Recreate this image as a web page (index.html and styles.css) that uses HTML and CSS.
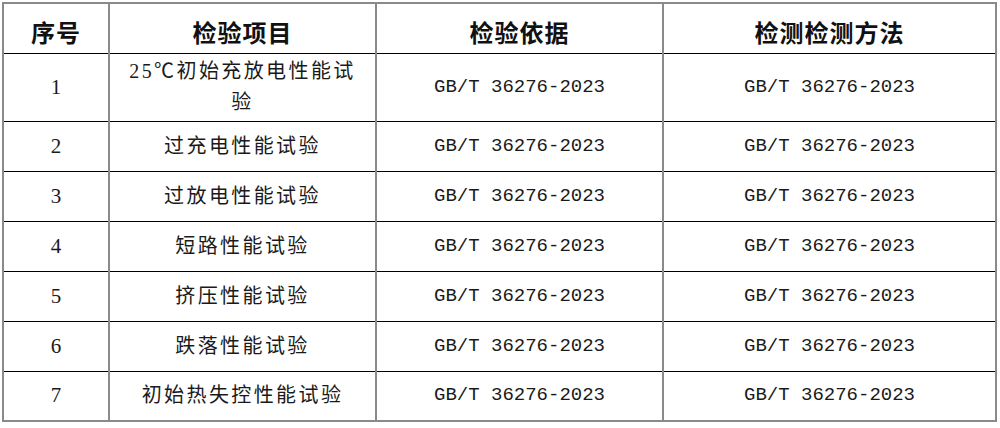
FILE: index.html
```html
<!DOCTYPE html>
<html lang="zh">
<head>
<meta charset="utf-8">
<link rel="stylesheet" href="styles.css">
</head>
<body>
<table class="spec">
  <colgroup>
    <col class="c1"><col class="c2"><col class="c3"><col class="c4">
  </colgroup>
  <thead>
    <tr><th>序号</th><th>检验项目</th><th>检验依据</th><th>检测检测方法</th></tr>
  </thead>
  <tbody>
    <tr class="tall"><td class="num">1</td><td>25℃初始充放电性能试<br>验</td><td class="std">GB/T 36276-2023</td><td class="std">GB/T 36276-2023</td></tr>
    <tr><td class="num">2</td><td>过充电性能试验</td><td class="std">GB/T 36276-2023</td><td class="std">GB/T 36276-2023</td></tr>
    <tr><td class="num">3</td><td>过放电性能试验</td><td class="std">GB/T 36276-2023</td><td class="std">GB/T 36276-2023</td></tr>
    <tr><td class="num">4</td><td>短路性能试验</td><td class="std">GB/T 36276-2023</td><td class="std">GB/T 36276-2023</td></tr>
    <tr><td class="num">5</td><td>挤压性能试验</td><td class="std">GB/T 36276-2023</td><td class="std">GB/T 36276-2023</td></tr>
    <tr><td class="num">6</td><td>跌落性能试验</td><td class="std">GB/T 36276-2023</td><td class="std">GB/T 36276-2023</td></tr>
    <tr><td class="num">7</td><td>初始热失控性能试验</td><td class="std">GB/T 36276-2023</td><td class="std">GB/T 36276-2023</td></tr>
  </tbody>
</table>
</body>
</html>
```
FILE: styles.css
```css
html, body {
  margin: 0;
  padding: 0;
  background: #fff;
}
body {
  padding: 2px 0 0 2px;
}
.spec {
  border-collapse: collapse;
  table-layout: fixed;
  width: 993px;
  border: 2px solid #8a8a8a;
  color: #1a1a1a;
  font-family: "Liberation Serif", "Noto Sans CJK SC", serif;
}
.c1 { width: 106px; }
.c2 { width: 267px; }
.c3 { width: 287px; }
.c4 { width: 333px; }
.spec th, .spec td {
  border-left: 2px solid #8a8a8a;
  border-right: 2px solid #8a8a8a;
  border-top: 1px solid #000;
  border-bottom: 1px solid #000;
  text-align: center;
  vertical-align: middle;
  padding: 0;
}
.spec thead tr { height: 50px; }
.spec th {
  font-family: "Noto Sans CJK SC", sans-serif;
  font-weight: 700;
  font-size: 24px;
  letter-spacing: 1px;
  padding-top: 8px;
  line-height: 30px;
  color: #111;
  border-top: 2px solid #8a8a8a;
}
.spec tbody tr { height: 50px; }
.spec tbody tr.tall { height: 68px; }
.spec td {
  font-family: "Liberation Serif", "Noto Sans CJK SC", serif;
  font-size: 20px;
  letter-spacing: 2.4px;
  line-height: 31px;
  font-weight: 400;
}
.spec td.num {
  font-size: 21px;
  letter-spacing: 0;
}
.spec td.std {
  font-family: "Liberation Mono", monospace;
  font-size: 19px;
  letter-spacing: 0;
}
.spec tbody tr:last-child td {
  border-bottom: 2px solid #8a8a8a;
}
```
